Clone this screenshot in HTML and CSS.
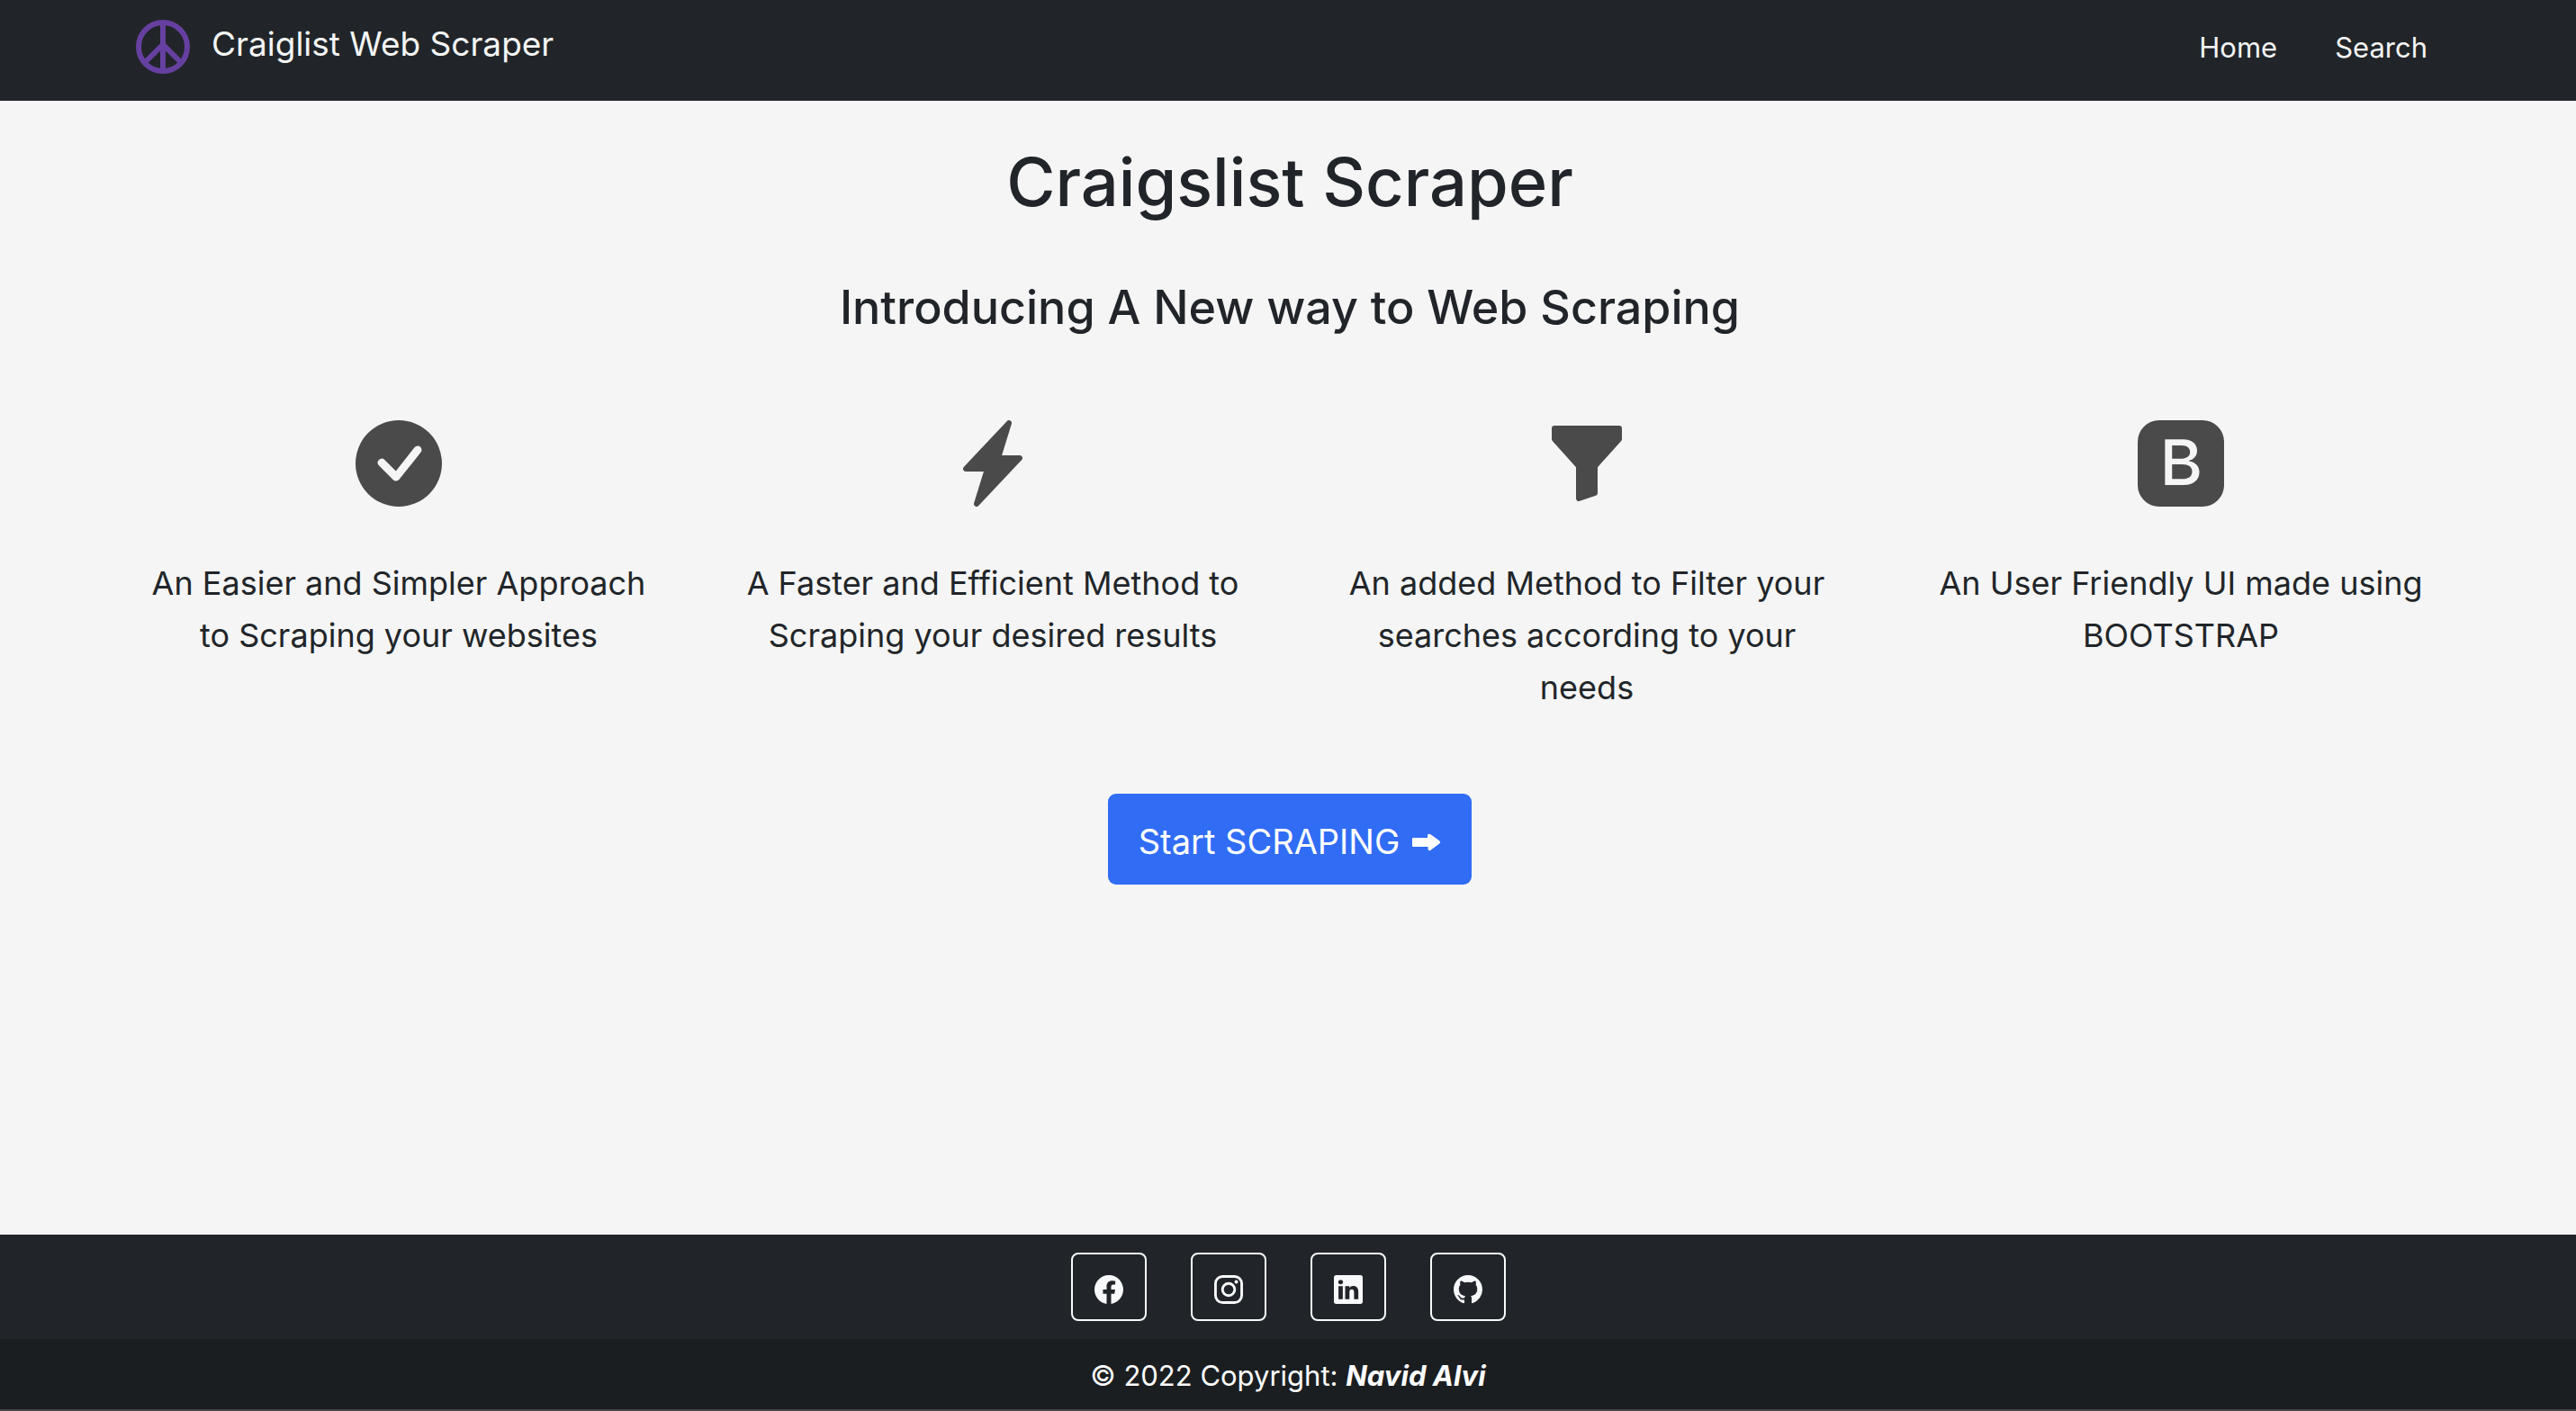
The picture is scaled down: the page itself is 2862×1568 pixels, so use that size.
FILE: index.html
```html
<!DOCTYPE html>
<html lang="en">
<head>
<meta charset="utf-8">
<meta name="viewport" content="width=device-width, initial-scale=1">
<title>Craigslist Scraper</title>
<link rel="stylesheet" href="styles.css">
</head>
<body>
<header class="site-header">
  <nav class="container navbar">
    <a class="brand" href="#">
      <svg class="brand-icon" viewBox="0 0 16 16" fill="none" stroke="currentColor" stroke-width="1.6" aria-hidden="true"><circle cx="8" cy="8" r="7.200"/><path d="M8 1V15M2.900 12.400L8 7.300L13.100 12.400"/></svg>
      <span class="brand-name">Craiglist Web Scraper</span>
    </a>
    <ul class="nav-links">
      <li><a href="#">Home</a></li>
      <li><a href="#search">Search</a></li>
    </ul>
  </nav>
</header>

<main class="main">
  <h1 class="title">Craigslist Scraper</h1>
  <h2 class="subtitle">Introducing A New way to Web Scraping</h2>
  <div class="container features">
    <section class="feature">
      <svg class="feature-icon" viewBox="0 0 16 16" fill="currentColor" aria-hidden="true"><path d="M16 8A8 8 0 1 1 0 8a8 8 0 0 1 16 0zm-3.970-3.030a.750.750 0 0 0-1.080.022L7.477 9.417 5.384 7.323a.750.750 0 0 0-1.060 1.060L6.970 11.030a.750.750 0 0 0 1.079-.020l3.992-4.990a.750.750 0 0 0-.010-1.050z"/></svg>
      <p>An Easier and Simpler Approach to Scraping your websites</p>
    </section>
    <section class="feature">
      <svg class="feature-icon" viewBox="0 0 16 16" fill="currentColor" aria-hidden="true"><path d="M11.251.068a.5.5 0 0 1 .227.580L9.677 6.500H13a.5.5 0 0 1 .364.843l-8 8.500a.5.5 0 0 1-.842-.490L6.323 9.500H3a.5.5 0 0 1-.364-.843l8-8.500a.5.5 0 0 1 .615-.090z"/></svg>
      <p>A Faster and Efficient Method to Scraping your desired results</p>
    </section>
    <section class="feature">
      <svg class="feature-icon" viewBox="0 0 16 16" fill="currentColor" aria-hidden="true"><path d="M1.500 1.500A.5.5 0 0 1 2 1h12a.5.5 0 0 1 .5.5v2a.5.5 0 0 1-.128.334L10 8.692V13.500a.5.5 0 0 1-.342.474l-3 1A.5.5 0 0 1 6 14.500V8.692L1.628 3.834A.5.5 0 0 1 1.500 3.500v-2z"/></svg>
      <p>An added Method to Filter your searches according to your needs</p>
    </section>
    <section class="feature">
      <svg class="feature-icon" viewBox="0 0 16 16" fill="currentColor" aria-hidden="true"><path d="M6.375 7.125V4.658h1.780c.973 0 1.542.457 1.542 1.237 0 .802-.604 1.230-1.764 1.230H6.375zm0 3.762h1.898c1.184 0 1.810-.480 1.810-1.377 0-.885-.650-1.348-1.886-1.348H6.375v2.725z"/><path d="M4.002 0a4 4 0 0 0-4 4v8a4 4 0 0 0 4 4h8a4 4 0 0 0 4-4V4a4 4 0 0 0-4-4h-8zm1.060 12V3.545h3.399c1.587 0 2.543.809 2.543 2.110 0 .884-.650 1.675-1.483 1.816v.100c1.143.117 1.904.931 1.904 2.033 0 1.488-1.084 2.396-2.888 2.396H5.062z"/></svg>
      <p>An User Friendly UI made using BOOTSTRAP</p>
    </section>
  </div>
  <button class="start-button" type="button">
    Start SCRAPING
    <svg class="arrow" viewBox="0 0 32 20" fill="currentColor" aria-hidden="true"><path d="M1 5H17V2.500C17 .6 19 .2 20.500 1.200L30.500 8.500Q32 10 30.500 11.200L20.500 18.700C19 19.800 17.500 19 17.500 17.200V15H1Q0 15 0 14V6Q0 5 1 5z"/></svg>
  </button>
</main>

<footer class="site-footer">
  <div class="socials">
    <a class="social" href="#facebook" aria-label="Facebook"><svg viewBox="0 0 16 16" fill="currentColor" aria-hidden="true"><path d="M16 8.049c0-4.446-3.582-8.050-8-8.050C3.580 0-.002 3.603-.002 8.050c0 4.017 2.926 7.347 6.750 7.951v-5.625h-2.030V8.050H6.750V6.275c0-2.017 1.195-3.131 3.022-3.131.876 0 1.791.157 1.791.157v1.980h-1.009c-.993 0-1.303.621-1.303 1.258v1.510h2.218l-.354 2.326H9.250V16c3.824-.604 6.750-3.934 6.750-7.951z"/></svg></a>
    <a class="social" href="#instagram" aria-label="Instagram"><svg viewBox="0 0 16 16" fill="none" stroke="currentColor" stroke-width="1.440" aria-hidden="true"><rect x=".72" y=".72" width="14.560" height="14.560" rx="4"/><circle cx="8" cy="8" r="3.390"/><circle cx="12.270" cy="3.730" r=".96" fill="currentColor" stroke="none"/></svg></a>
    <a class="social" href="#linkedin" aria-label="LinkedIn"><svg viewBox="0 0 16 16" fill="currentColor" aria-hidden="true"><path d="M0 1.146C0 .513.526 0 1.175 0h13.650C15.474 0 16 .513 16 1.146v13.708c0 .633-.526 1.146-1.175 1.146H1.175C.526 16 0 15.487 0 14.854V1.146zm4.943 12.248V6.169H2.542v7.225h2.401zm-1.200-8.212c.837 0 1.358-.554 1.358-1.248-.015-.709-.520-1.248-1.342-1.248-.822 0-1.359.540-1.359 1.248 0 .694.521 1.248 1.327 1.248h.016zm4.908 8.212V9.359c0-.216.016-.432.080-.586.173-.431.568-.878 1.232-.878.869 0 1.216.662 1.216 1.634v3.865h2.401V9.250c0-2.220-1.184-3.252-2.764-3.252-1.274 0-1.845.700-2.165 1.193v.025h-.016a5.540 5.540 0 0 1 .016-.025V6.169h-2.400c.030.678 0 7.225 0 7.225h2.400z"/></svg></a>
    <a class="social" href="#github" aria-label="GitHub"><svg viewBox="0 0 16 16" fill="currentColor" aria-hidden="true"><path d="M8 0C3.580 0 0 3.580 0 8c0 3.540 2.290 6.530 5.470 7.590.4.070.550-.170.550-.380 0-.190-.010-.820-.010-1.490-2.010.370-2.530-.490-2.690-.940-.090-.230-.480-.940-.820-1.130-.280-.150-.680-.520-.010-.530.630-.010 1.080.580 1.230.820.720 1.210 1.870.870 2.330.660.070-.520.280-.870.510-1.070-1.780-.200-3.640-.890-3.640-3.950 0-.870.310-1.590.820-2.150-.080-.200-.360-1.020.080-2.120 0 0 .670-.210 2.200.820.640-.180 1.320-.270 2-.270.680 0 1.360.090 2 .270 1.530-1.040 2.200-.820 2.200-.820.440 1.100.160 1.920.080 2.120.510.560.820 1.270.820 2.150 0 3.070-1.870 3.750-3.650 3.950.290.250.540.730.540 1.480 0 1.070-.010 1.930-.010 2.200 0 .210.150.460.550.380A8.012 8.012 0 0 0 16 8c0-4.420-3.580-8-8-8z"/></svg></a>
  </div>
  <p class="copyright">© 2022 Copyright: <a href="#author">Navid Alvi</a></p>
</footer>
</body>
</html>
```

FILE: styles.css
```css
* {
  box-sizing: border-box;
}

body {
  display: flex;
  flex-direction: column;
  min-height: 100vh;
  margin: 0;
  background: #f5f5f5;
  color: #212529;
  font-family: Inter, "Liberation Sans", sans-serif;
  font-size: 31px;
  line-height: 48px;
}

a {
  color: inherit;
  text-decoration: none;
}

.container {
  width: 100%;
  max-width: 2640px;
  margin: 0 auto;
}

.site-header {
  padding: 0 0 0 4px;
  background: #212529;
  color: #f5f5f5;
}

.navbar {
  display: flex;
  justify-content: space-between;
  min-height: 112px;
  padding: 22px 56px 0 38px;
}

.brand {
  display: flex;
  gap: 24px;
}

.brand-icon {
  width: 60px;
  height: 60px;
  color: #6640a0;
}

.brand-name {
  font-size: 37px;
  line-height: 54px;
}

.nav-links {
  display: flex;
  gap: 64px;
  margin: 0;
  padding: 7px 0 0;
  list-style: none;
}

.main {
  display: flex;
  flex: 1;
  flex-direction: column;
  align-items: center;
  padding: 42px 0 64px 4px;
  text-align: center;
}

.title,
.subtitle {
  margin: 0;
  font-weight: 500;
}

.title {
  font-size: 74px;
  line-height: 96px;
}

.subtitle {
  margin-top: 58px;
  font-size: 52px;
  line-height: 68px;
}

.features {
  display: grid;
  grid-template-columns: repeat(4, 1fr);
  margin-top: 91px;
}

.feature {
  padding: 0 48px;
  font-size: 36px;
  line-height: 58px;
}

.feature p {
  margin: 56px 0 0;
}

.feature-icon {
  display: block;
  width: 96px;
  height: 96px;
  margin: 0 auto;
  color: #4a4a4a;
}

.start-button {
  display: flex;
  align-items: center;
  gap: 14px;
  margin-top: 89px;
  padding: 23px 34px 17px;
  border: 0;
  border-radius: 9px;
  background: #316cf4;
  color: #fff;
  font: inherit;
  font-size: 38px;
  line-height: 61px;
}

.arrow {
  width: 32px;
  height: 20px;
}

.site-footer {
  border-bottom: 2px solid #454447;
  background: #212529;
  color: #fff;
}

.socials {
  display: flex;
  justify-content: center;
  gap: 49px;
  padding: 20px 0;
}

.social {
  display: flex;
  align-items: center;
  justify-content: center;
  width: 84px;
  height: 76px;
  padding-top: 6px;
  border: 2px solid #f8f9fa;
  border-radius: 8px;
  color: #f8f9fa;
}

.social svg {
  width: 32px;
  height: 32px;
}

.copyright {
  margin: 0;
  padding: 17px 0 13px;
  background: #1b1e21;
  text-align: center;
}

.copyright a {
  font-style: italic;
  font-weight: 700;
}
```
